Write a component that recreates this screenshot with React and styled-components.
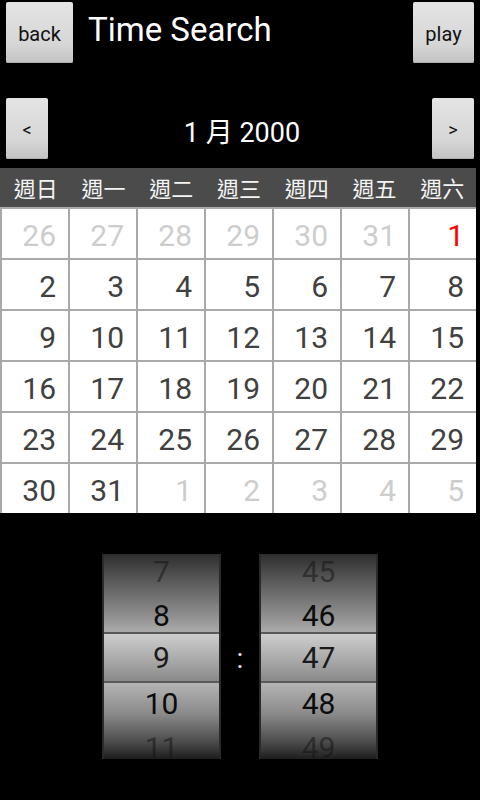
import React from 'react';
import styled, { createGlobalStyle } from 'styled-components';

const GlobalStyle = createGlobalStyle`
  * { box-sizing: border-box; }
  body {
    margin: 0;
    background: #000;
    font-family: Roboto, "Noto Sans CJK TC", sans-serif;
  }
`;

const Screen = styled.div`
  width: 480px;
  height: 800px;
  background: #000;
  color: #fff;
  overflow: hidden;
`;

const TopBar = styled.div`
  display: flex;
  align-items: center;
  padding: 2px 6px 0;
  height: 63px;
`;

const Title = styled.div`
  flex: 1;
  margin-left: 15px;
  margin-top: -6px;
  font-size: 33px;
  color: #fff;
`;

const Button = styled.button`
  width: ${p => p.$w}px;
  height: 61px;
  padding: 3px 0 0;
  border: none;
  border-radius: 2px;
  background: linear-gradient(to bottom, #e4e4e4 0%, #d6d6d6 70%, #c2c2c2 100%);
  box-shadow: inset 0 -1px 0 #b0b0b0;
  color: #111;
  font-family: Roboto, sans-serif;
  font-size: ${p => p.$size}px;
  line-height: 58px;
`;

const NavBar = styled.div`
  display: flex;
  align-items: center;
  justify-content: space-between;
  padding: 0 6px;
  margin-top: 35px;
  height: 61px;
`;

const MonthLabel = styled.div`
  font-size: 27px;
  color: #fff;
  margin: 4px 0 0 4px;
`;

const Calendar = styled.div`
  width: 476px;
  margin-top: 9px;
`;

const WeekBar = styled.div`
  display: grid;
  grid-template-columns: repeat(7, 1fr);
  height: 39px;
  background: #4b4b4b;
  padding-left: 2px;
`;

const WeekDay = styled.div`
  text-align: center;
  font-size: 22px;
  line-height: 43px;
  color: #f4f4f4;
`;

const Grid = styled.div`
  display: grid;
  grid-template-columns: repeat(7, 66px);
  grid-auto-rows: 49px;
  gap: 2px;
  padding: 2px 0 0 2px;
  background: #a9a9a9;
`;

const Day = styled.div`
  background: #fff;
  text-align: right;
  padding-right: 12px;
  font-size: 30px;
  line-height: 54px;
  color: ${p => (p.$red ? '#ff0000' : p.$muted ? '#cdcdcd' : '#404040')};
`;

const Picker = styled.div`
  display: flex;
  justify-content: center;
  align-items: center;
  margin-top: 41px;
`;

const Wheel = styled.div`
  width: 119px;
  height: 205px;
  overflow: hidden;
  border-left: 2px solid #2a2a2a;
  border-right: 2px solid #2a2a2a;
  background: linear-gradient(
    to bottom,
    #2e2e2e 0%,
    #5c5c5c 14%,
    #8e8e8e 30%,
    #a8a8a8 37%,
    #a8a8a8 62%,
    #b4b4b4 63%,
    #8a8a8a 78%,
    #4a4a4a 92%,
    #1e1e1e 100%
  );
`;

const Items = styled.div`
  display: flex;
  flex-direction: column;
  margin-top: -4px;
`;

const Item = styled.div`
  height: 44px;
  line-height: 44px;
  text-align: center;
  font-size: 30px;
  color: ${p => (p.$faded ? 'rgba(20,20,20,0.55)' : '#0c0c0c')};
`;

const Selected = styled(Item)`
  height: 51px;
  line-height: 47px;
  margin: -6px -2px -1px;
  border-top: 2px solid #5a5a5a;
  border-bottom: 2px solid #5a5a5a;
  background: linear-gradient(to bottom, #cdcdcd 0%, #b0b0b0 45%, #8a8a8a 100%);
  color: #1a1a1a;
`;

const Colon = styled.div`
  width: 38px;
  text-align: center;
  font-size: 28px;
  color: #e6e6e6;
  margin-top: 4px;
`;

const WEEK = ['週日', '週一', '週二', '週三', '週四', '週五', '週六'];

const DAYS = [
  ...[26, 27, 28, 29, 30, 31].map(n => ({ n, muted: true })),
  { n: 1, red: true },
  ...Array.from({ length: 30 }, (_, i) => ({ n: i + 2 })),
  ...[1, 2, 3, 4, 5].map(n => ({ n, muted: true })),
];

function TimeWheel({ values, sel }) {
  return (
    <Wheel>
      <Items>
        {values.map((v, i) =>
          i === sel ? (
            <Selected key={v}>{v}</Selected>
          ) : (
            <Item key={v} $faded={i === 0 || i === values.length - 1}>
              {v}
            </Item>
          )
        )}
      </Items>
    </Wheel>
  );
}

export default function App() {
  return (
    <>
      <GlobalStyle />
      <Screen>
        <TopBar>
          <Button $w={67} $size={20}>back</Button>
          <Title>Time Search</Title>
          <Button $w={61} $size={20}>play</Button>
        </TopBar>

        <NavBar>
          <Button $w={42} $size={18}>&lt;</Button>
          <MonthLabel>1 月 2000</MonthLabel>
          <Button $w={42} $size={18}>&gt;</Button>
        </NavBar>

        <Calendar>
          <WeekBar>
            {WEEK.map(w => (
              <WeekDay key={w}>{w}</WeekDay>
            ))}
          </WeekBar>
          <Grid>
            {DAYS.map((d, i) => (
              <Day key={i} $muted={d.muted} $red={d.red}>
                {d.n}
              </Day>
            ))}
          </Grid>
        </Calendar>

        <Picker>
          <TimeWheel values={[7, 8, 9, 10, 11]} sel={2} />
          <Colon>:</Colon>
          <TimeWheel values={[45, 46, 47, 48, 49]} sel={2} />
        </Picker>
      </Screen>
    </>
  );
}
